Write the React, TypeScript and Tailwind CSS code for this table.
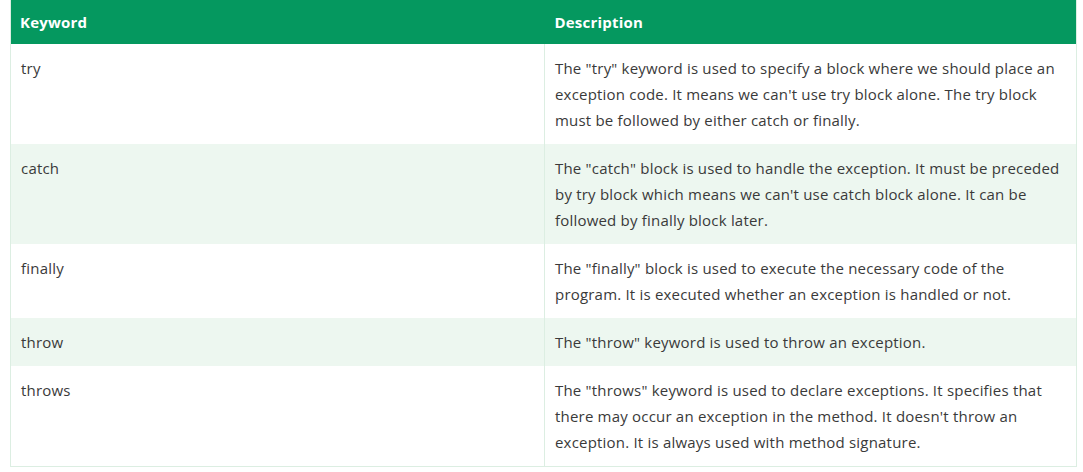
const rows = [
  {
    keyword: "try",
    description:
      'The "try" keyword is used to specify a block where we should place an exception code. It means we can\'t use try block alone. The try block must be followed by either catch or finally.',
  },
  {
    keyword: "catch",
    description:
      'The "catch" block is used to handle the exception. It must be preceded by try block which means we can\'t use catch block alone. It can be followed by finally block later.',
  },
  {
    keyword: "finally",
    description:
      'The "finally" block is used to execute the necessary code of the program. It is executed whether an exception is handled or not.',
  },
  {
    keyword: "throw",
    description: 'The "throw" keyword is used to throw an exception.',
  },
  {
    keyword: "throws",
    description:
      'The "throws" keyword is used to declare exceptions. It specifies that there may occur an exception in the method. It doesn\'t throw an exception. It is always used with method signature.',
  },
];

const App = () => {
  return (
    <div className="bg-white w-[1083px] h-[472px] pl-[10px] pr-[6px] font-['Open_Sans',sans-serif]">
      <table className="w-full border-collapse table-fixed border-x border-b border-[#dceee2]">
        <thead>
          <tr className="bg-[#05985f] text-white h-[44px]">
            <th className="w-[534px] text-left font-bold text-[15px] tracking-[0.2px] pl-[9px] pr-[10px]">
              Keyword
            </th>
            <th className="text-left font-bold text-[15px] tracking-[0.2px] px-[10px]">
              Description
            </th>
          </tr>
        </thead>
        <tbody>
          {rows.map((row, index) => (
            <tr
              key={index}
              className={index % 2 === 1 ? "bg-[#edf7f0]" : "bg-white"}
            >
              <td className="align-top text-[15px] leading-[26px] tracking-[0.2px] text-[#3a3a3a] px-[10px] py-[11px] border-r border-[#dceee2]">
                {row.keyword}
              </td>
              <td className="align-top text-[15px] leading-[26px] tracking-[0.2px] text-[#3a3a3a] px-[10px] py-[11px]">
                {row.description}
              </td>
            </tr>
          ))}
        </tbody>
      </table>
    </div>
  );
};

export default App;
